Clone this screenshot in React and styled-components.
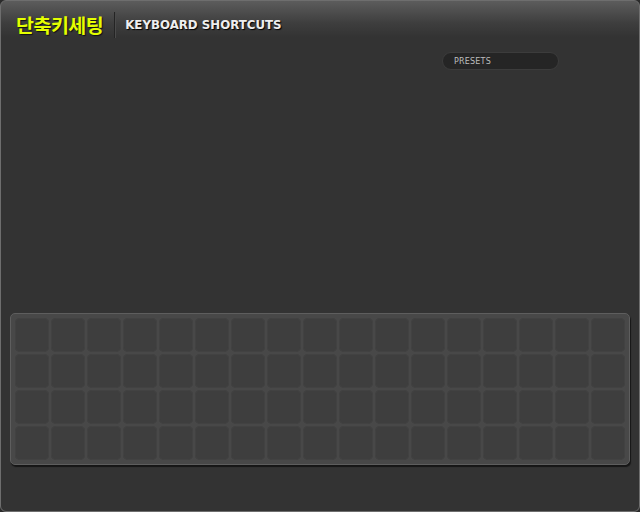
import React from 'react';
import styled, { createGlobalStyle } from 'styled-components';

const GlobalStyle = createGlobalStyle`
  html, body {
    margin: 0;
    padding: 0;
    background: #2b2b2b;
  }
  * {
    box-sizing: border-box;
  }
`;

const Frame = styled.div`
  width: 640px;
  height: 512px;
  display: flex;
  flex-direction: column;
  border: 1px solid #6e6e6e;
  border-radius: 6px;
  background: linear-gradient(to bottom, #5c5c5c 0px, #3e3e3e 22px, #333333 36px, #333333 100%);
  font-family: 'DejaVu Sans', 'Noto Sans CJK KR', sans-serif;
  overflow: hidden;
`;

const Header = styled.div`
  height: 47px;
  display: flex;
  align-items: center;
  padding: 0 0 0 15px;
`;

const KoTitle = styled.div`
  font-family: 'Noto Sans CJK KR', sans-serif;
  font-weight: 700;
  font-size: 19.5px;
  color: #e4ff00;
  letter-spacing: -0.5px;
  text-shadow: 1px 1px 1px #111;
  line-height: 1;
`;

const Divider = styled.div`
  width: 1px;
  height: 26px;
  margin: 0 10px 0 11px;
  background: #242424;
  box-shadow: 1px 0 0 #4a4a4a;
`;

const EnTitle = styled.div`
  font-family: 'DejaVu Sans', sans-serif;
  font-weight: 700;
  font-size: 11.8px;
  letter-spacing: 0;
  color: #eeeeee;
  text-shadow: 1px 1px 1px #000;
  padding-top: 1px;
`;

const PresetRow = styled.div`
  display: flex;
  justify-content: flex-end;
  padding: 4px 80px 0 0;
`;

const Presets = styled.div`
  width: 117px;
  height: 18px;
  border-radius: 9px;
  background: #252525;
  border: 1px solid #3c3c3c;
  display: flex;
  align-items: center;
  padding-left: 11px;
  font-family: 'DejaVu Sans', sans-serif;
  font-size: 8px;
  letter-spacing: 0.2px;
  color: #bdbdbd;
`;

const Spacer = styled.div`
  flex: 1;
`;

const Keyboard = styled.div`
  margin: 0 0 46px 9px;
  width: 620px;
  padding: 4px;
  border: 1px solid #5e5e5e;
  border-radius: 5px;
  background: #484848;
  box-shadow: 1px 2px 1px #161616;
  display: grid;
  grid-template-columns: repeat(17, 34px);
  grid-auto-rows: 34px;
  gap: 2px;
`;

const Key = styled.div`
  background: #3e3e3e;
  border-radius: 5px;
  box-shadow: inset 0 0 0 1px #424242;
`;

export default function App() {
  const keys = Array.from({ length: 68 }, (_, i) => i);
  return (
    <>
      <GlobalStyle />
      <Frame>
        <Header>
          <KoTitle>단축키세팅</KoTitle>
          <Divider />
          <EnTitle>KEYBOARD SHORTCUTS</EnTitle>
        </Header>
        <PresetRow>
          <Presets>PRESETS</Presets>
        </PresetRow>
        <Spacer />
        <Keyboard>
          {keys.map(k => (
            <Key key={k} />
          ))}
        </Keyboard>
      </Frame>
    </>
  );
}
